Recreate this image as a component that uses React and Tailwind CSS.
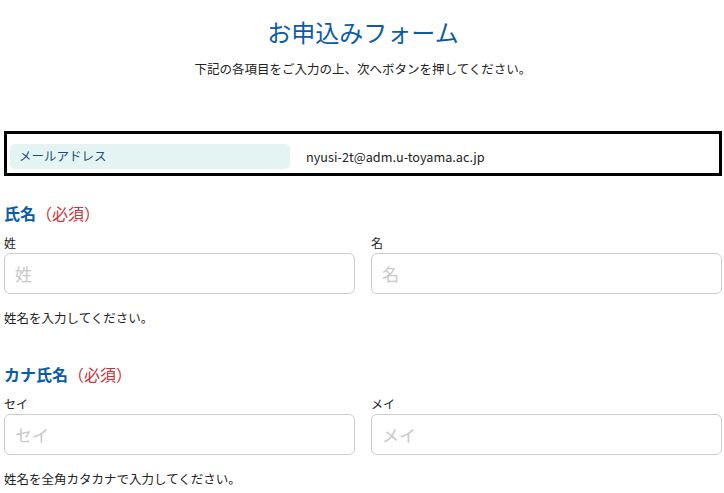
const font = { fontFamily: '"Noto Sans CJK JP", "Noto Sans", sans-serif' }

function Field({ label, placeholder }) {
  return (
    <div className="flex min-w-0 flex-1 flex-col">
      <label className="text-[12px] leading-[16px] text-[#222]">{label}</label>
      <input
        placeholder={placeholder}
        className="mt-[2px] h-[41px] w-full rounded-[6px] border border-[#cccccc] bg-white px-[10px] text-[17px] text-[#333] outline-none placeholder:text-[#c8c8c8]"
      />
    </div>
  )
}

function NameSection({ title, first, last, help, className }) {
  return (
    <section className={className}>
      <h2 className="text-[16px] leading-[22px] font-bold text-[#0b5ba6]">
        {title}
        <span className="font-normal text-[#c9353b]">（必須）</span>
      </h2>
      <div className="mt-[11px] flex gap-[16px]">
        <Field label={first} placeholder={first} />
        <Field label={last} placeholder={last} />
      </div>
      <p className="mt-[15px] text-[12.5px] leading-[18px] text-[#222]">{help}</p>
    </section>
  )
}

export default function App() {
  return (
    <div className="min-h-[493px] w-full bg-white pl-[4px] pr-[2px]" style={font}>
      <header className="pt-[16px] text-center">
        <h1 className="text-[24px] leading-[32px] text-[#0b5ba6]">お申込みフォーム</h1>
        <p className="mt-[12px] text-[12.5px] leading-[18px] text-[#222]">
          下記の各項目をご入力の上、次へボタンを押してください。
        </p>
      </header>

      <div className="mt-[53px] flex h-[45px] items-center border-[3px] border-black pt-[6px] pl-[3px]">
        <div className="flex h-[25px] w-[280px] items-center rounded-[5px] bg-[#e4f4f3] pl-[9px] text-[12.5px] text-[#1d4f7c]">
          メールアドレス
        </div>
        <div className="ml-[16px] text-[12.7px] text-[#222]">nyusi-2t@adm.u-toyama.ac.jp</div>
      </div>

      <NameSection className="mt-[26px]" title="氏名" first="姓" last="名" help="姓名を入力してください。" />
      <NameSection className="mt-[36px]" title="カナ氏名" first="セイ" last="メイ" help="姓名を全角カタカナで入力してください。" />
    </div>
  )
}
